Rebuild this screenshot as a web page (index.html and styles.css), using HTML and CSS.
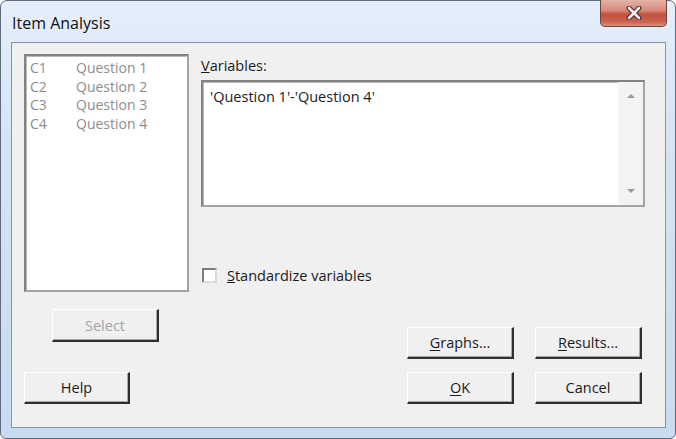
FILE: index.html
```html
<!DOCTYPE html>
<html lang="en">
<head>
<meta charset="UTF-8">
<title>Item Analysis</title>
<link rel="stylesheet" href="styles.css">
</head>
<body>
<div class="window">
  <div class="titlebar">
    <span class="title">Item Analysis</span>
    <div class="close-btn">
      <svg width="16" height="14" viewBox="0 0 16 14">
        <path d="M3 2 L13 12 M13 2 L3 12" stroke="#4a3432" stroke-width="5" stroke-linecap="round"/>
        <path d="M3 2 L13 12 M13 2 L3 12" stroke="#f6f2f0" stroke-width="2.6" stroke-linecap="round"/>
      </svg>
    </div>
  </div>

  <div class="client">
    <!-- column list + Select / Help -->
    <div class="left-col">
      <div class="listbox">
        <div class="list-row"><span>C1</span><span>Question 1</span></div>
        <div class="list-row"><span>C2</span><span>Question 2</span></div>
        <div class="list-row"><span>C3</span><span>Question 3</span></div>
        <div class="list-row"><span>C4</span><span>Question 4</span></div>
      </div>
      <button class="btn btn-select" disabled>Select</button>
      <button class="btn btn-help">Help</button>
    </div>

    <!-- variables + options + actions -->
    <div class="right-col">
      <div class="field-label"><u>V</u>ariables:</div>
      <div class="textbox">
        <div class="textbox-text">'Question 1'-'Question 4'</div>
        <div class="scrollbar">
          <span class="arrow arrow-up"></span>
          <span class="arrow arrow-down"></span>
        </div>
      </div>
      <label class="check-row">
        <span class="checkbox"></span>
        <span><u>S</u>tandardize variables</span>
      </label>
      <div class="actions">
        <button class="btn"><u>G</u>raphs...</button>
        <button class="btn"><u>R</u>esults...</button>
        <button class="btn"><u>O</u>K</button>
        <button class="btn">Cancel</button>
      </div>
    </div>
  </div>
</div>
</body>
</html>
```

FILE: styles.css
```css
html, body {
  margin: 0;
  background-color: #ffffff;
}

body {
  font-family: "Open Sans", "Liberation Sans", sans-serif;
  font-size: 14.5px;
  color: #1b1b1b;
}

.window {
  box-sizing: border-box;
  width: 676px;
  height: 439px;
  display: flex;
  flex-direction: column;
  border: 1px solid #5d6b7c;
  border-radius: 7px 7px 6px 6px;
  background: linear-gradient(180deg, #e6effa 0%, #d6e4f5 30%, #c8dbf0 100%);
}

.titlebar {
  height: 41px;
  display: flex;
  justify-content: space-between;
  align-items: flex-start;
  padding-left: 11px;
}

.title {
  font-size: 16px;
  line-height: 20px;
  padding-top: 12px;
  color: #111;
}

.close-btn {
  box-sizing: border-box;
  width: 67px;
  height: 27px;
  margin-top: -1px;
  margin-right: 8px;
  display: flex;
  justify-content: center;
  align-items: center;
  border: 1px solid #6e4440;
  border-top: none;
  border-radius: 0 0 5px 5px;
  background: linear-gradient(180deg, #e2b2a8 0%, #d88a7c 40%, #c5503e 55%, #cd6554 85%, #dc9284 100%);
}

.client {
  flex: 1;
  display: flex;
  margin: 0 9px 10px 10px;
  padding: 11px 20px 0 12px;
  border: 1px solid #8595a8;
  background-color: #f0f0f0;
}

.left-col {
  width: 165px;
  display: flex;
  flex-direction: column;
  align-items: flex-start;
}

.listbox {
  box-sizing: border-box;
  width: 165px;
  height: 238px;
  padding: 3px 4px;
  background-color: #ffffff;
  border: 2px solid;
  border-color: #828282 #a4a4a4 #a4a4a4 #828282;
  box-shadow: inset 1px 1px #b8b8b8;
}

.list-row {
  display: grid;
  grid-template-columns: 46px auto;
  font-size: 14px;
  line-height: 18.5px;
  color: #8d8d8d;
}

.btn {
  box-sizing: border-box;
  width: 107px;
  height: 32px;
  padding: 0;
  font-family: inherit;
  font-size: 14.5px;
  color: #1b1b1b;
  background-color: #f0f0f0;
  border-style: solid;
  border-width: 1px 2px 2px 1px;
  border-color: #ffffff #2f2f2f #2f2f2f #ffffff;
  box-shadow: inset -1px -1px #a8a8a8;
}

.btn u {
  text-underline-offset: 2px;
}

.btn-select {
  height: 33px;
  margin-top: 17px;
  margin-left: 28px;
  color: #a3a3a3;
}

.btn-help {
  width: 106px;
  margin-top: 30px;
}

.right-col {
  flex: 1;
  margin-left: 12px;
  display: flex;
  flex-direction: column;
}

.field-label {
  margin-top: 2px;
  line-height: 20px;
}

.textbox {
  box-sizing: border-box;
  height: 127px;
  margin-top: 4px;
  display: flex;
  background-color: #ffffff;
  border: 2px solid;
  border-color: #828282 #a4a4a4 #a4a4a4 #828282;
  box-shadow: inset 1px 1px #b8b8b8;
}

.textbox-text {
  flex: 1;
  padding: 5px 7px;
  line-height: 20px;
}

.scrollbar {
  width: 24px;
  position: relative;
  background-color: #f3f3f3;
  border-left: 1px solid #f8f8f8;
}

.arrow {
  position: absolute;
  left: 8px;
  width: 0;
  height: 0;
  border-left: 4px solid transparent;
  border-right: 4px solid transparent;
}

.arrow-up {
  top: 12px;
  border-bottom: 4px solid #9a9a9a;
}

.arrow-down {
  bottom: 12px;
  border-top: 4px solid #9a9a9a;
}

.check-row {
  margin-top: 58px;
  height: 20px;
  display: flex;
  align-items: center;
  gap: 10px;
}

.checkbox {
  box-sizing: border-box;
  width: 15px;
  height: 15px;
  margin-left: 1px;
  background-color: #ffffff;
  border: 2px solid;
  border-color: #7e7e7e #dadada #dadada #7e7e7e;
}

.actions {
  margin-top: 42px;
  align-self: flex-end;
  padding-right: 3px;
  display: grid;
  grid-template-columns: 107px 107px;
  column-gap: 21px;
  row-gap: 13px;
}
```
